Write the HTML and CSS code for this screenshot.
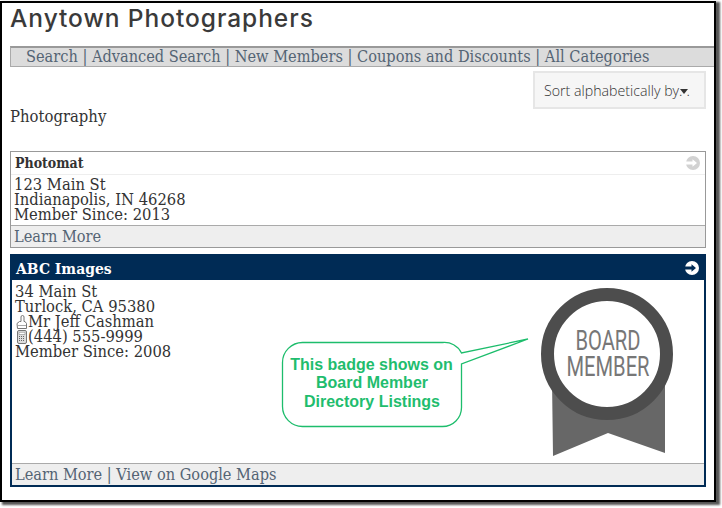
FILE: index.html
```html
<!DOCTYPE html>
<html lang="en">
<head>
<meta charset="utf-8">
<title>Anytown Photographers</title>
<link rel="stylesheet" href="styles.css">
</head>
<body>
<div class="frame">
  <h1 class="title">Anytown Photographers</h1>
  <nav class="nav"><a>Search</a> | <a>Advanced Search</a> | <a>New Members</a> | <a>Coupons and Discounts</a> | <a>All Categories</a></nav>
  <div class="sort-row"><div class="sort">Sort alphabetically by.<span class="caret"></span>.</div></div>
  <p class="category">Photography</p>

  <section class="card">
    <header class="card-head">
      <span>Photomat</span>
      <svg class="go" viewBox="0 0 14 14"><circle cx="7" cy="7" r="7" fill="currentColor"/><path class="go-arrow" d="M0 5.500H6.500V3.200L11 7 6.500 10.800V8.500H0Z"/></svg>
    </header>
    <div class="card-body">
      <div>123 Main St</div>
      <div>Indianapolis, IN 46268</div>
      <div>Member Since: 2013</div>
    </div>
    <footer class="card-foot"><a>Learn More</a></footer>
  </section>

  <section class="card featured">
    <header class="card-head">
      <span>ABC Images</span>
      <svg class="go" viewBox="0 0 14 14"><circle cx="7" cy="7" r="7" fill="currentColor"/><path class="go-arrow" d="M0 5.500H6.500V3.200L11 7 6.500 10.800V8.500H0Z"/></svg>
    </header>
    <div class="card-body">
      <div>34 Main St</div>
      <div>Turlock, CA 95380</div>
      <div class="icon-line"><svg class="mini" viewBox="0 0 12 15"><path fill="none" stroke="#777" d="M1.500 14.500h9v-5l-1.500-2h-1v-4.500a1.500 1.500 0 0 0-3 0v4.500h-1.500l-2.500 2Z"/><path stroke="#aaa" d="M2 11.500h8"/></svg>Mr Jeff Cashman</div>
      <div class="icon-line"><svg class="mini" viewBox="0 0 12 15"><rect x="1.500" y="1.500" width="9" height="13" rx="1.500" fill="#ddd" stroke="#777"/><path fill="#fff" stroke="#888" stroke-width=".6" d="M3 3.300h6v2.200H3Z"/><path stroke="#666" stroke-dasharray="1 1" d="M3 7.500h6M3 9.500h6M3 11.500h6"/></svg>(444) 555-9999</div>
      <div>Member Since: 2008</div>
      <svg class="overlay" viewBox="0 0 694 183" aria-label="Callout and board member badge">
        <g transform="translate(-12,-280)">
          <path d="M302.500 342.500H442.500A19 19 0 0 1 461.500 353L528 339 461.500 364V407.500A19 19 0 0 1 442.500 426.500H302.500A20 20 0 0 1 282.500 406.500V362.500A20 20 0 0 1 302.500 342.500Z" fill="#fff" stroke="#1dbd6c" stroke-width="1.300"/>
          <text class="note" x="371.500" y="370">This badge shows on</text>
          <text class="note" x="372" y="388">Board Member</text>
          <text class="note" x="372" y="407">Directory Listings</text>
          <path d="M552 380H665V453L608 433 553 456Z" fill="#676767"/>
          <circle cx="607" cy="354" r="59.500" fill="#fff" stroke="#4d4d4d" stroke-width="13"/>
          <text class="seal" x="608" y="350" textLength="65" lengthAdjust="spacingAndGlyphs">BOARD</text>
          <text class="seal" x="608" y="376" textLength="83" lengthAdjust="spacingAndGlyphs">MEMBER</text>
        </g>
      </svg>
    </div>
    <footer class="card-foot"><a>Learn More</a> | <a>View on Google Maps</a></footer>
  </section>
</div>
</body>
</html>
```
FILE: styles.css
```css
* { box-sizing: border-box; }
html, body { margin: 0; padding: 0; background: #fff; }
body { width: 722px; height: 508px; overflow: hidden; font-family: "DejaVu Serif", "Liberation Serif", serif; font-stretch: condensed; color: #333; }
.frame {
  width: 716px; height: 501px; margin-top: 1px;
  border: 2px solid #000;
  box-shadow: 3px 2px 2px 1px #555;
  padding: 0 0 0 8px;
}
.title { margin: 0; height: 43px; font: 500 24.500px/30px Inter, "Open Sans", sans-serif; letter-spacing: 0.950px; color: #3a3a3a; }
.nav { height: 21px; padding-left: 15px; background: #dcdcdc; border-top: 2px solid #999; border-bottom: 1px solid #aaa; border-left: 1px solid #aaa; font-size: 16.200px; line-height: 18px; color: #546474; white-space: nowrap; }
.nav a { color: #546474; }
.sort-row { display: flex; justify-content: flex-end; padding: 4px 8px 0 0; }
.sort { width: 173px; height: 38px; background: #f6f6f6; border: 2px solid #e6e6e6; padding-left: 9px; font: 300 14.200px/35px "Open Sans", sans-serif; color: #333; white-space: nowrap; }
.caret { display: inline-block; width: 0; height: 0; border: 4px solid transparent; border-top: 5px solid #333; border-bottom: 0; margin: 0 -2px 1px -2px; vertical-align: middle; }
.category { margin: 0; height: 42px; font-size: 16.500px; line-height: 16px; color: #333; }
.card { width: 696px; border: 1px solid #999; color: #333; }
.card-head { height: 23px; display: flex; justify-content: space-between; align-items: center; padding: 0 5px 0 4px; border-bottom: 1px solid #eee; font-size: 14px; font-weight: 700; color: #333; }
.go { width: 14px; height: 14px; color: #d2d2d2; flex: none; }
.go-arrow { fill: #fff; }
.card-body { position: relative; padding: 2px 3px 0; font-size: 16.400px; line-height: 15px; height: 50px; white-space: nowrap; }
.card-foot { height: 22px; border-top: 1px solid #aaa; background: #eee; padding-left: 3px; font-size: 16.200px; line-height: 21px; color: #546474; }
.card-foot a { color: #546474; }
.featured { margin-top: 6px; height: 233px; border: 2px solid #002b55; }
.featured .card-head { height: 24px; background: #002b55; color: #fff; font-size: 15.500px; border: 0; padding: 0 5px 0 4px; }
.featured .go { color: #fff; }
.featured .go-arrow { fill: #002b55; }
.featured .card-body { height: 183px; padding: 4px 3px 0; }
.icon-line { display: flex; align-items: center; height: 15px; }
.mini { width: 12px; height: 15px; flex: none; margin-left: 1px; }
.overlay { position: absolute; left: 0; top: 0; width: 694px; height: 183px; }
.note { font: 700 16px "Liberation Sans", sans-serif; fill: #1fbd6e; text-anchor: middle; }
.seal { font: 400 27px "Roboto", sans-serif; fill: #777; text-anchor: middle; }
```
